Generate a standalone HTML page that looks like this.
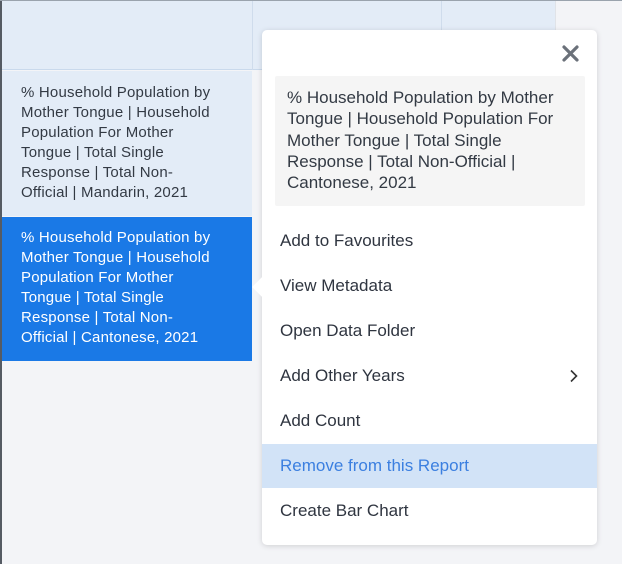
<!DOCTYPE html>
<html><head><style>
*{margin:0;padding:0;box-sizing:border-box}
body{width:622px;height:564px;overflow:hidden;background:#f3f4f7;font-family:"Liberation Sans",sans-serif;position:relative}
.abs{position:absolute}
.cell{font-size:15px;line-height:20px;color:#333a44;white-space:nowrap;letter-spacing:0.2px}
.pop{left:262px;top:30px;width:335px;height:515px;background:#fff;border-radius:5px;box-shadow:0 1px 6px rgba(0,0,0,.15)}
.mi{position:absolute;left:0;width:335px;height:45px;line-height:45px;padding-left:18px;font-size:17px;color:#2f3540}
</style></head><body>
<div class="abs" style="left:0;top:0;width:2px;height:564px;background:#555b63"></div>
<div class="abs" style="left:2px;top:0;width:553px;height:70px;background:#e3ecf7;border-bottom:1px solid #c9d9ec"></div>
<div class="abs" style="left:252px;top:0;width:1px;height:70px;background:#cfdcec"></div>
<div class="abs" style="left:441px;top:0;width:1px;height:70px;background:#cfdcec"></div>
<div class="abs" style="left:555px;top:0;width:1px;height:70px;background:#e0e3e8"></div>
<div class="abs" style="left:0;top:0;width:622px;height:1px;background:#9aa3ad"></div>
<div class="abs cell" style="left:2px;top:71px;width:250px;height:145px;background:#e3ecf7;padding:12px 0 0 19px">% Household Population by<br>Mother Tongue | Household<br>Population For Mother<br>Tongue | Total Single<br>Response | Total Non-<br>Official | Mandarin, 2021</div>
<div class="abs cell" style="left:2px;top:217px;width:250px;height:144px;background:#1a79e6;color:#fff;padding:11px 0 0 19px">% Household Population by<br>Mother Tongue | Household<br>Population For Mother<br>Tongue | Total Single<br>Response | Total Non-<br>Official | Cantonese, 2021</div>
<div class="abs pop">
<div class="abs" style="left:-7px;top:250px;width:14px;height:14px;background:#fff;transform:rotate(45deg)"></div>
<svg class="abs" style="left:300px;top:15px" width="17" height="17" viewBox="0 0 17 17"><path d="M2 2L15 15M15 2L2 15" stroke="#6b717a" stroke-width="3.2" stroke-linecap="round"/></svg>
<div class="abs" style="left:13px;top:46px;width:310px;height:130px;background:#f5f5f5;border-radius:2px;padding:11px 12px;font-size:17px;line-height:21.3px;color:#333a44">% Household Population by Mother Tongue | Household Population For Mother Tongue | Total Single Response | Total Non-Official | Cantonese, 2021</div>
<div class="mi" style="top:188px">Add to Favourites</div>
<div class="mi" style="top:233px">View Metadata</div>
<div class="mi" style="top:278px">Open Data Folder</div>
<div class="mi" style="top:323px">Add Other Years<svg class="abs" style="left:307px;top:16px" width="10" height="14" viewBox="0 0 10 14"><path d="M2 1.5L7.5 7L2 12.5" stroke="#333" stroke-width="1.6" fill="none"/></svg></div>
<div class="mi" style="top:368px">Add Count</div>
<div class="mi" style="top:414px;height:44px;line-height:44px;background:#d2e3f7;color:#3b7fe0">Remove from this Report</div>
<div class="mi" style="top:458px">Create Bar Chart</div>
</div>
</body></html>
